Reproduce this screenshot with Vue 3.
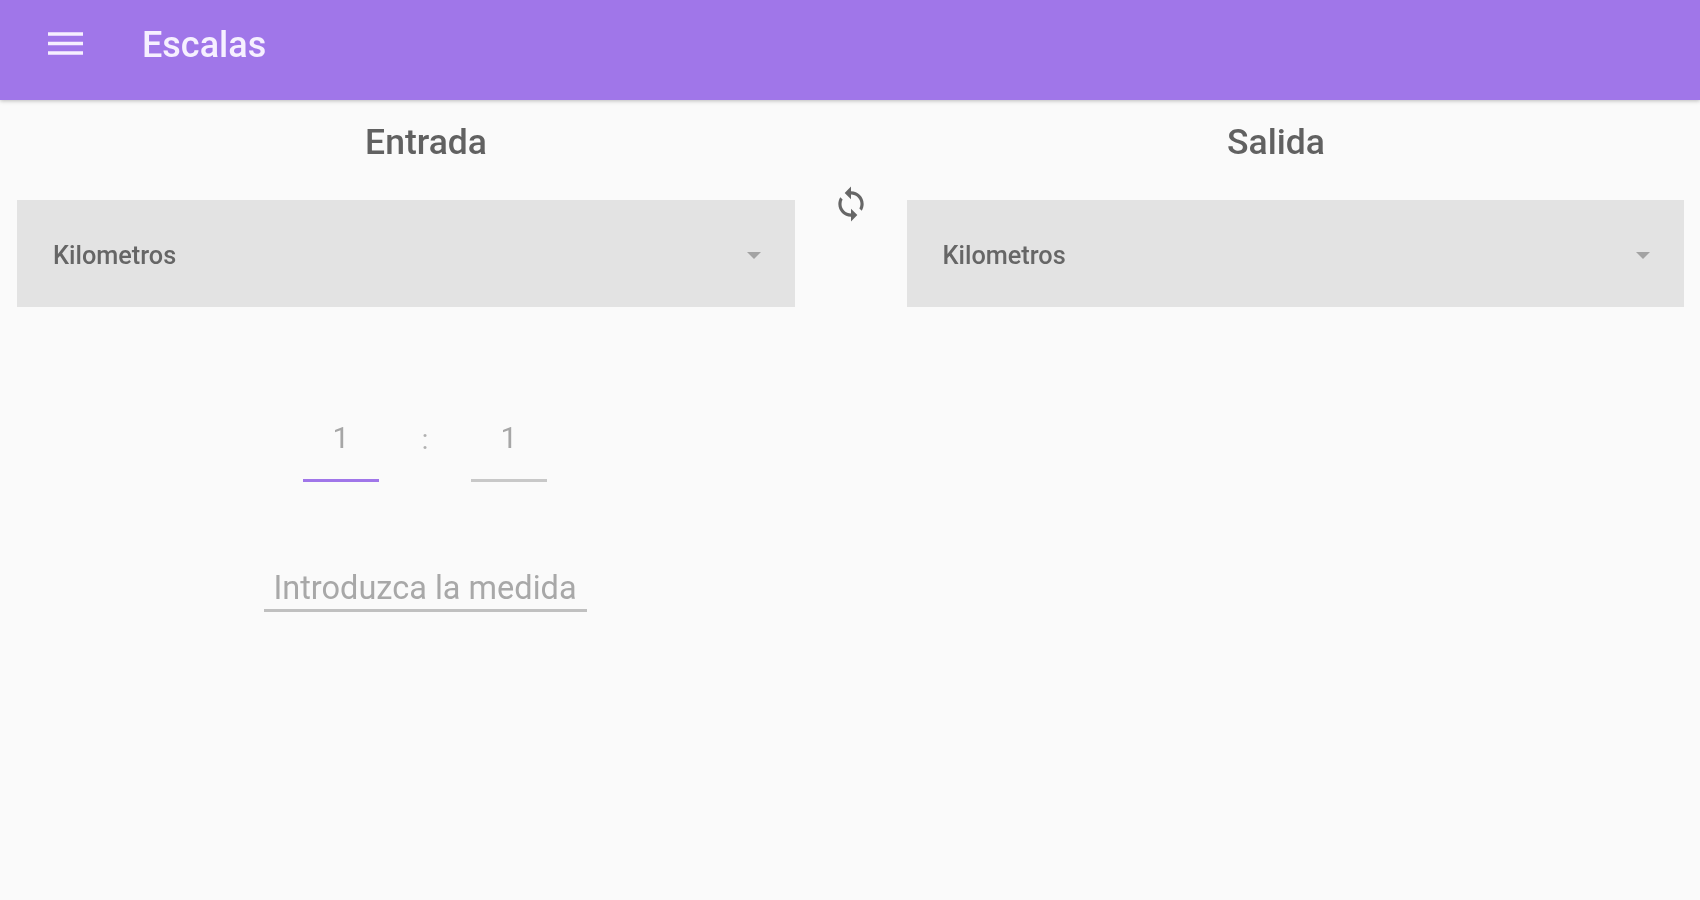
<template>
  <div class="page">
    <header class="toolbar">
      <button class="menu" type="button" aria-label="Menu">
        <svg viewBox="0 0 35 23" width="35" height="23">
          <path d="M0 2h35M0 11.5h35M0 21h35" stroke="#f6f0ff" stroke-width="3.6" fill="none" />
        </svg>
      </button>
      <h1 class="title">Escalas</h1>
    </header>

    <main class="content">
      <div class="heads">
        <h2>Entrada</h2>
        <h2>Salida</h2>
      </div>

      <div class="selects">
        <div class="select">
          <span>{{ entrada }}</span>
          <i class="arrow"></i>
        </div>
        <button class="swap" type="button" aria-label="Intercambiar">
          <svg viewBox="0 0 24 24" width="38" height="38">
            <path fill="#666" d="M12 4V1L8 5l4 4V6c3.31 0 6 2.69 6 6 0 1.01-.25 1.97-.7 2.8l1.46 1.46C19.54 15.03 20 13.57 20 12c0-4.42-3.58-8-8-8zm0 14c-3.31 0-6-2.69-6-6 0-1.01.25-1.97.7-2.8L5.24 7.74C4.46 8.97 4 10.43 4 12c0 4.42 3.58 8 8 8v3l4-4-4-4v3z" />
          </svg>
        </button>
        <div class="select">
          <span>{{ salida }}</span>
          <i class="arrow"></i>
        </div>
      </div>

      <div class="half">
        <div class="ratio">
          <div class="num active">1</div>
          <span class="colon">:</span>
          <div class="num">1</div>
        </div>
        <div class="measure">Introduzca la medida</div>
      </div>
    </main>
  </div>
</template>

<script setup>
import { ref } from 'vue'

const entrada = ref('Kilometros')
const salida = ref('Kilometros')
</script>

<style scoped>
.page {
  min-height: 900px;
  background: #fafafa;
  font-family: Roboto, "Liberation Sans", sans-serif;
  filter: blur(0.6px);
}

.toolbar {
  height: 100px;
  background: #a076e9;
  display: flex;
  align-items: flex-start;
  padding-left: 48px;
  box-shadow: 0 1px 4px rgba(0, 0, 0, 0.25);
}

.menu {
  background: none;
  border: none;
  padding: 0;
  margin-top: 32px;
  height: 23px;
  display: block;
}

.menu svg {
  display: block;
}

.title {
  margin: 24px 0 0 59px;
  font-size: 36px;
  line-height: 42px;
  font-weight: 500;
  color: #f6f0ff;
}

.heads {
  display: grid;
  grid-template-columns: 1fr 1fr;
  padding-top: 23px;
  height: 75px;
  box-sizing: border-box;
}

.heads h2 {
  margin: 0;
  padding-left: 2px;
  text-align: center;
  font-size: 35.5px;
  line-height: 38px;
  font-weight: 500;
  color: #616161;
}

.selects {
  display: grid;
  grid-template-columns: 1fr 112px 1fr;
  padding: 25px 16px 0 17px;
}

.select {
  height: 107px;
  background: #e3e3e3;
  display: flex;
  align-items: center;
  justify-content: space-between;
  padding: 3px 34px 0 36px;
  box-sizing: border-box;
  font-size: 25.3px;
  font-weight: 500;
  color: #666;
}

.arrow {
  width: 0;
  height: 0;
  border-left: 7px solid transparent;
  border-right: 7px solid transparent;
  border-top: 7px solid #a3a3a3;
}

.swap {
  background: none;
  border: none;
  padding: 0;
  height: 38px;
  margin-top: -15px;
  display: flex;
  justify-content: center;
}

.half {
  width: 850px;
  display: flex;
  flex-direction: column;
  align-items: center;
}

.ratio {
  display: flex;
  align-items: flex-start;
  margin-top: 114px;
}

.num {
  width: 76px;
  height: 61px;
  box-sizing: border-box;
  text-align: center;
  font-size: 30px;
  line-height: 34px;
  color: #a6a6a6;
  border-bottom: 3px solid #c8c8c8;
}

.num.active {
  border-bottom-color: #a076e9;
}

.colon {
  width: 92px;
  text-align: center;
  font-size: 27px;
  line-height: 36px;
  padding-top: 1px;
  color: #b0b0b0;
}

.measure {
  margin-top: 84px;
  width: 323px;
  height: 46px;
  box-sizing: border-box;
  border-bottom: 3px solid #c0c0c0;
  text-align: center;
  font-size: 32.5px;
  line-height: 44px;
  color: #a8a8a8;
}
</style>
